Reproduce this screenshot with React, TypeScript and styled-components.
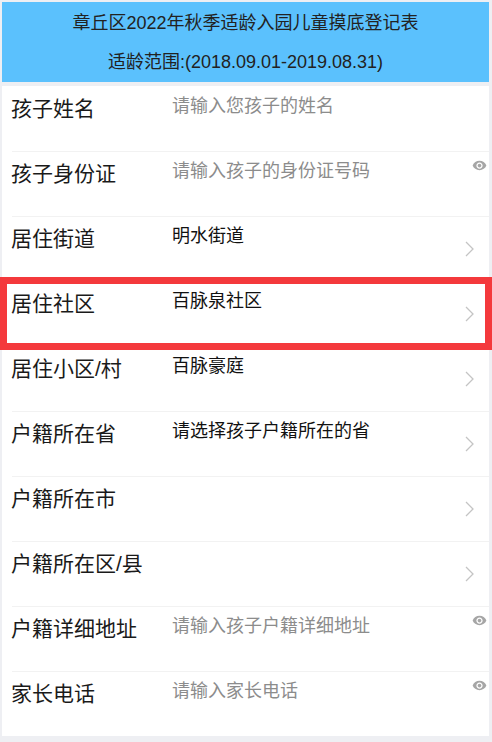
import React from "react";
import styled, { createGlobalStyle } from "styled-components";

const Global = createGlobalStyle`
  html, body { margin: 0; padding: 0; background: #eeeff3; }
  body { font-family: "Liberation Sans", "Noto Sans CJK SC", sans-serif; }
  * { box-sizing: border-box; }
`;

const Page = styled.div`
  width: 492px;
  height: 742px;
  padding: 2px 3px 0 2px;
  background: #eeeff3;
  overflow: hidden;
`;

const Header = styled.header`
  height: 80px;
  background: #5bc1fd;
  display: flex;
  flex-direction: column;
  align-items: center;
  justify-content: center;
  gap: 13px;
  color: #222;
  font-size: 18px;
`;

const HeaderLine = styled.div`
  line-height: 26px;
`;

const List = styled.div`
  margin-top: 4px;
  background: #fff;
`;

const Row = styled.div<{ $highlight?: boolean }>`
  position: relative;
  height: 65px;
  display: grid;
  grid-template-columns: 161px 1fr 30px;
  padding-left: 9px;
  & + &::before {
    content: "";
    position: absolute;
    left: 10px;
    right: 0;
    top: 0;
    height: 1px;
    background: #f2f2f2;
  }
  &::after {
    content: "";
    display: ${(p) => (p.$highlight ? "block" : "none")};
    position: absolute;
    left: -2px;
    right: -3px;
    top: -4px;
    bottom: -4px;
    border: 7px solid #f4393c;
    pointer-events: none;
  }
`;

const Label = styled.div`
  padding-top: 8px;
  font-size: 21px;
  line-height: 30px;
  color: #1a1a1a;
  white-space: nowrap;
`;

const Value = styled.div<{ $placeholder?: boolean }>`
  padding-top: 8px;
  font-size: 18px;
  line-height: 24px;
  color: ${(p) => (p.$placeholder ? "#8c8c8c" : "#111")};
  white-space: nowrap;
`;

const Side = styled.div<{ $kind: "eye" | "arrow" | "none" }>`
  display: flex;
  justify-content: center;
  align-items: ${(p) => (p.$kind === "eye" ? "flex-start" : "center")};
  padding-top: ${(p) => (p.$kind === "eye" ? "7px" : "0")};
  padding-right: ${(p) => (p.$kind === "eye" ? "0" : "10px")};
  padding-left: ${(p) => (p.$kind === "eye" ? "10px" : "0")};
`;

const Eye = () => (
  <svg width="15" height="15" viewBox="0 0 24 24">
    <path
      fill="#a6a6a6"
      d="M12 4.5C7 4.5 2.73 7.61 1 12c1.73 4.39 6 7.5 11 7.5s9.27-3.11 11-7.5c-1.73-4.39-6-7.5-11-7.5zM12 17c-2.76 0-5-2.24-5-5s2.24-5 5-5 5 2.24 5 5-2.24 5-5 5zm0-8c-1.66 0-3 1.34-3 3s1.34 3 3 3 3-1.34 3-3-1.34-3-3-3z"
    />
  </svg>
);

const Arrow = () => (
  <svg width="9" height="16" viewBox="0 0 9 16">
    <path d="M1 1l7 7-7 7" fill="none" stroke="#c4c4c4" strokeWidth="1.3" />
  </svg>
);

type Item = {
  label: string;
  value?: string;
  placeholder?: boolean;
  kind: "eye" | "arrow" | "none";
  highlight?: boolean;
};

const items: Item[] = [
  { label: "孩子姓名", value: "请输入您孩子的姓名", placeholder: true, kind: "none" },
  { label: "孩子身份证", value: "请输入孩子的身份证号码", placeholder: true, kind: "eye" },
  { label: "居住街道", value: "明水街道", kind: "arrow" },
  { label: "居住社区", value: "百脉泉社区", kind: "arrow", highlight: true },
  { label: "居住小区/村", value: "百脉豪庭", kind: "arrow" },
  { label: "户籍所在省", value: "请选择孩子户籍所在的省", kind: "arrow" },
  { label: "户籍所在市", value: "", kind: "arrow" },
  { label: "户籍所在区/县", value: "", kind: "arrow" },
  { label: "户籍详细地址", value: "请输入孩子户籍详细地址", placeholder: true, kind: "eye" },
  { label: "家长电话", value: "请输入家长电话", placeholder: true, kind: "eye" },
];

export default function App() {
  return (
    <>
      <Global />
      <Page>
        <Header>
          <HeaderLine>章丘区2022年秋季适龄入园儿童摸底登记表</HeaderLine>
          <HeaderLine>适龄范围:(2018.09.01-2019.08.31)</HeaderLine>
        </Header>
        <List>
          {items.map((it) => (
            <Row key={it.label} $highlight={it.highlight}>
              <Label>{it.label}</Label>
              <Value $placeholder={it.placeholder}>{it.value}</Value>
              <Side $kind={it.kind}>
                {it.kind === "eye" ? <Eye /> : it.kind === "arrow" ? <Arrow /> : null}
              </Side>
            </Row>
          ))}
        </List>
      </Page>
    </>
  );
}
